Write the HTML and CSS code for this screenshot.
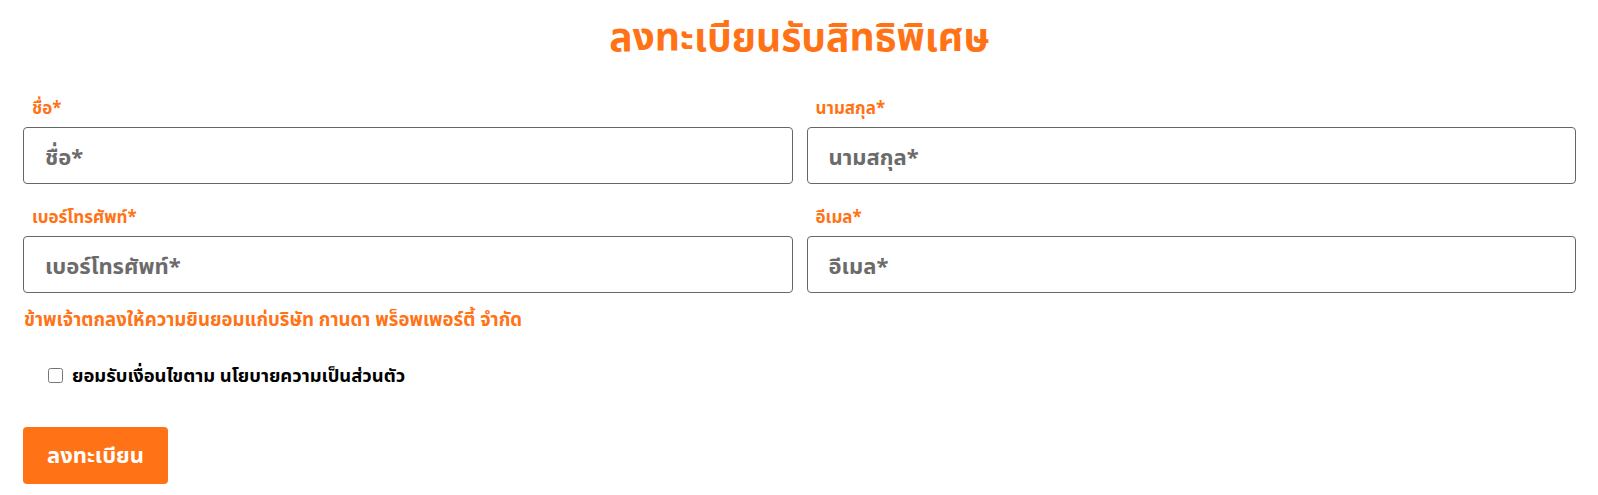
FILE: index.html
```html
<!doctype html>
<html lang="th">
<head>
    <meta charset="UTF-8">
    <title>ลงทะเบียนรับสิทธิพิเศษ</title>
    <link rel="stylesheet" href="styles.css">
</head>
<body>
    <div class="container">
        <h1>ลงทะเบียนรับสิทธิพิเศษ</h1>
        <form id="register-form">
            <div class="form-grid">
                <div class="form-group">
                    <label for="firstname">ชื่อ*</label>
                    <input type="text" id="firstname" name="firstname" placeholder="ชื่อ*">
                </div>
                <div class="form-group">
                    <label for="lastname">นามสกุล*</label>
                    <input type="text" id="lastname" name="lastname" placeholder="นามสกุล*">
                </div>
                <div class="form-group">
                    <label for="phone">เบอร์โทรศัพท์*</label>
                    <input type="text" id="phone" name="phone" placeholder="เบอร์โทรศัพท์*">
                </div>
                <div class="form-group">
                    <label for="email">อีเมล*</label>
                    <input type="text" id="email" name="email" placeholder="อีเมล*">
                </div>
            </div>
            <p class="consent">ข้าพเจ้าตกลงให้ความยินยอมแก่บริษัท กานดา พร็อพเพอร์ตี้ จำกัด</p>
            <div class="check-row">
                <input type="checkbox" id="accept" name="accept">
                <label for="accept">ยอมรับเงื่อนไขตาม นโยบายความเป็นส่วนตัว</label>
            </div>
            <button type="submit">ลงทะเบียน</button>
        </form>
    </div>
</body>
</html>
```

FILE: styles.css
```css
body {
    margin: 0;
    font-family: "Noto Sans", "Noto Sans Thai", sans-serif;
    background-color: #fff;
}

.container {
    padding: 0 22px 0 23px;
}

.container h1 {
    margin: 0;
    padding-top: 13px;
    margin-bottom: 38px;
    font-size: 39px;
    line-height: 46px;
    font-weight: 700;
    color: #ff7316;
    text-align: center;
}

.form-grid {
    display: grid;
    grid-template-columns: 1fr 1fr;
    column-gap: 14px;
    row-gap: 22px;
}

.form-group label {
    display: block;
    padding-left: 9px;
    margin-bottom: 8px;
    font-size: 17px;
    line-height: 22px;
    font-weight: 700;
    color: #ff7316;
}

input[type="text"] {
    display: block;
    width: 100%;
    box-sizing: border-box;
    height: 57px;
    padding: 0 21px;
    border: 1px solid #666;
    border-radius: 4px;
    font-family: inherit;
    font-size: 22px;
    font-weight: 700;
    color: #333;
}

input[type="text"]::placeholder {
    color: #6b6b6b;
}

.consent {
    margin: 14px 0 0 1px;
    font-size: 18.6px;
    line-height: 24px;
    font-weight: 700;
    color: #ff7316;
}

.check-row {
    display: flex;
    align-items: center;
    gap: 9px;
    margin: 32px 0 0 25px;
}

.check-row input {
    width: 15px;
    height: 15px;
    margin: 0;
}

.check-row label {
    font-size: 18.4px;
    line-height: 24px;
    font-weight: 700;
    color: #000;
}

button {
    display: block;
    margin-top: 40px;
    width: 145px;
    height: 57px;
    background-color: #ff7316;
    color: #fff;
    border: none;
    border-radius: 4px;
    font-family: inherit;
    font-size: 22px;
    font-weight: 700;
    cursor: pointer;
}
```
